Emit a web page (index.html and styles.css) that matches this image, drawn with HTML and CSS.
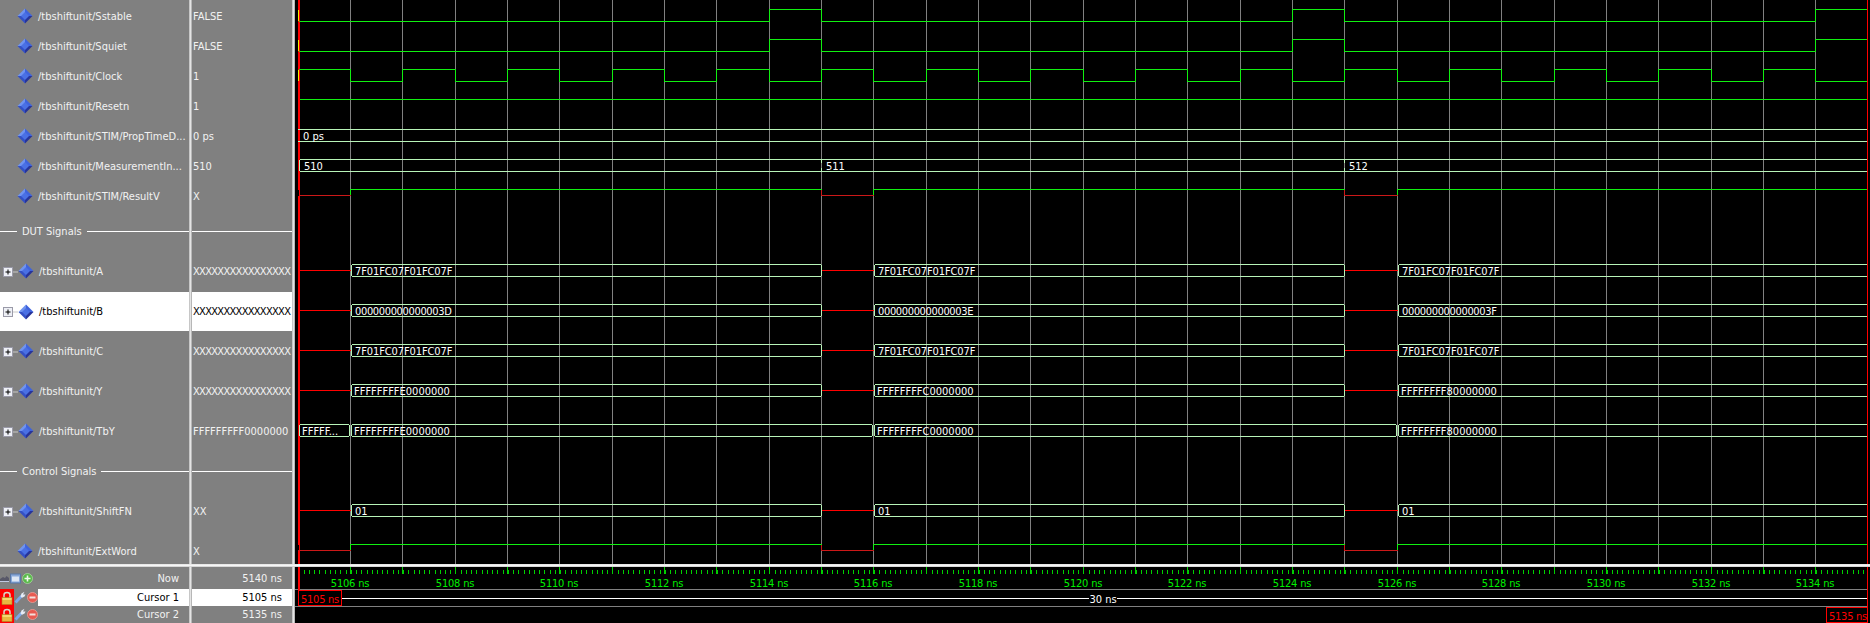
FILE: index.html
```html
<!DOCTYPE html>
<html lang="en">
<head>
<meta charset="utf-8">
<title>Wave</title>
<link rel="stylesheet" href="styles.css">
</head>
<body>
<svg class="defs" width="0" height="0" aria-hidden="true">
  <defs>
    <symbol id="dia" viewBox="0 0 16 16">
      <path d="M8 .5 .5 8 8 8Z" fill="#6f93f0"/>
      <path d="M8 .5 15.500 8 8 8Z" fill="#3f63dc"/>
      <path d="M.5 8 8 15.500 8 8Z" fill="#3450c4"/>
      <path d="M15.500 8 8 15.500 8 8Z" fill="#27349a"/>
      <path d="M8 4 12 8 8 12 4 8Z" fill="#4a70e4"/>
    </symbol>
    <symbol id="box" viewBox="0 0 15 10">
      <rect x=".5" y=".5" width="9" height="9" fill="#eef0f6" stroke="#9a9aa8"/>
      <path d="M2.500 5H7.500M5 2.500V7.500" stroke="#000" fill="none"/>
      <path d="M10 5H15" stroke="#c8c8c8" fill="none"/>
    </symbol>
    <symbol id="lock" viewBox="0 0 12 14">
      <path d="M3 7V4C3 .8 9 .8 9 4V7" fill="none" stroke="#d8d8c8" stroke-width="1.500"/>
      <rect x="1" y="6.500" width="10" height="7" fill="#e8b840" stroke="#b08820" stroke-width=".6"/>
      <rect x="1.500" y="7" width="9" height="2" fill="#f6d870"/>
    </symbol>
    <symbol id="wrench" viewBox="0 0 12 13">
      <path d="M1.500 11.500 7.500 5" stroke="#7fa8e8" stroke-width="2.800" fill="none"/>
      <path d="M6.500 5.500 7.500 2.500 10.500 .8 9 3.500 11.500 3.500 10.500 5.500 8 6.800Z" fill="#e6ecf6"/>
    </symbol>
    <symbol id="minus" viewBox="0 0 11 11">
      <circle cx="5.500" cy="5.500" r="5" fill="#e85a50" stroke="#f0a098" stroke-width=".8"/>
      <rect x="2.500" y="4.500" width="6" height="2" fill="#f4e0dc"/>
    </symbol>
    <symbol id="plus" viewBox="0 0 11 11">
      <circle cx="5.500" cy="5.500" r="5" fill="#58b848" stroke="#a8d8a0" stroke-width=".8"/>
      <path d="M2.500 5.500H8.500M5.500 2.500V8.500" stroke="#f0f8ec" stroke-width="1.600"/>
    </symbol>
    <symbol id="view" viewBox="0 0 11 10">
      <rect x=".5" y=".5" width="10" height="9" fill="#88a8d8" stroke="#5878a8"/>
      <rect x="2" y="3" width="7" height="5" fill="#dce6f4"/>
    </symbol>
    <symbol id="cam" viewBox="0 0 9 9">
      <path d="M0 7.500H9V4L6.500 2 5 4 3 3 0 5Z" fill="#585868"/>
      <path d="M0 7.500H9" stroke="#c0c8e0" fill="none"/>
    </symbol>
    <g id="bus">
      <path class="bus" d="M352.500 .5H820.500L821.500 1.500V11.500L820.500 12.500H352.500L351.500 11.500V1.500ZM875.500 .5H1343.500L1344.500 1.500V11.500L1343.500 12.500H875.500L874.500 11.500V1.500ZM1867 .5H1399.500L1398.500 1.500V11.500L1399.500 12.500H1867"/>
      <path class="x" d="M299 6.500H351M822 6.500H874M1345 6.500H1398"/>
    </g>
  </defs>
</svg>

<main class="app">
  <section class="top">
    <div class="col names">
      <div class="row"><svg class="dia"><use href="#dia"/></svg><span>/tbshiftunit/Sstable</span></div>
      <div class="row"><svg class="dia"><use href="#dia"/></svg><span>/tbshiftunit/Squiet</span></div>
      <div class="row"><svg class="dia"><use href="#dia"/></svg><span>/tbshiftunit/Clock</span></div>
      <div class="row"><svg class="dia"><use href="#dia"/></svg><span>/tbshiftunit/Resetn</span></div>
      <div class="row"><svg class="dia"><use href="#dia"/></svg><span>/tbshiftunit/STIM/PropTimeD...</span></div>
      <div class="row"><svg class="dia"><use href="#dia"/></svg><span>/tbshiftunit/MeasurementIn...</span></div>
      <div class="row"><svg class="dia"><use href="#dia"/></svg><span>/tbshiftunit/STIM/ResultV</span></div>
      <div class="row tall divider"><i class="stub"></i><span>DUT Signals</span><i class="rule"></i></div>
      <div class="row tall exp"><svg class="box"><use href="#box"/></svg><svg class="dia"><use href="#dia"/></svg><span>/tbshiftunit/A</span></div>
      <div class="row tall exp sel"><svg class="box"><use href="#box"/></svg><svg class="dia"><use href="#dia"/></svg><span>/tbshiftunit/B</span></div>
      <div class="row tall exp"><svg class="box"><use href="#box"/></svg><svg class="dia"><use href="#dia"/></svg><span>/tbshiftunit/C</span></div>
      <div class="row tall exp"><svg class="box"><use href="#box"/></svg><svg class="dia"><use href="#dia"/></svg><span>/tbshiftunit/Y</span></div>
      <div class="row tall exp"><svg class="box"><use href="#box"/></svg><svg class="dia"><use href="#dia"/></svg><span>/tbshiftunit/TbY</span></div>
      <div class="row tall divider"><i class="stub"></i><span>Control Signals</span><i class="rule"></i></div>
      <div class="row tall exp"><svg class="box"><use href="#box"/></svg><svg class="dia"><use href="#dia"/></svg><span>/tbshiftunit/ShiftFN</span></div>
      <div class="row tall"><svg class="dia"><use href="#dia"/></svg><span>/tbshiftunit/ExtWord</span></div>
    </div>
    <div class="vsep"></div>
    <div class="col vals">
      <div class="row">FALSE</div>
      <div class="row">FALSE</div>
      <div class="row">1</div>
      <div class="row">1</div>
      <div class="row">0 ps</div>
      <div class="row">510</div>
      <div class="row">X</div>
      <div class="row tall divider"><i class="rule"></i></div>
      <div class="row tall xs">XXXXXXXXXXXXXXXX</div>
      <div class="row tall sel xs">XXXXXXXXXXXXXXXX</div>
      <div class="row tall xs">XXXXXXXXXXXXXXXX</div>
      <div class="row tall xs">XXXXXXXXXXXXXXXX</div>
      <div class="row tall">FFFFFFFFF0000000</div>
      <div class="row tall divider"><i class="rule"></i></div>
      <div class="row tall">XX</div>
      <div class="row tall">X</div>
    </div>
    <div class="vsep"></div>
    <svg class="wave" viewBox="295 0 1575 564" width="1575" height="564">
      <path class="grid" d="M350.500 0V564M402.500 0V564M455.500 0V564M507.500 0V564M559.500 0V564M612.500 0V564M664.500 0V564M716.500 0V564M769.500 0V564M821.500 0V564M873.500 0V564M926.500 0V564M978.500 0V564M1030.500 0V564M1083.500 0V564M1135.500 0V564M1187.500 0V564M1240.500 0V564M1292.500 0V564M1344.500 0V564M1397.500 0V564M1449.500 0V564M1501.500 0V564M1554.500 0V564M1606.500 0V564M1658.500 0V564M1711.500 0V564M1763.500 0V564M1815.500 0V564"/>
      <rect class="cur" x="298" y="0" width="2" height="564"/>
      <path class="sig" d="M298.500 21.500H769.500V9.500H821.500V21.500H1292.500V9.500H1344.500V21.500H1815.500V9.500H1867"/>
      <path class="sig" d="M298.500 51.500H769.500V39.500H821.500V51.500H1292.500V39.500H1344.500V51.500H1815.500V39.500H1867"/>
      <path class="sig" d="M298.500 69.500H350.500V81.500H402.500V69.500H455.500V81.500H507.500V69.500H559.500V81.500H612.500V69.500H664.500V81.500H716.500V69.500H769.500V81.500H821.500V69.500H873.500V81.500H926.500V69.500H978.500V81.500H1030.500V69.500H1083.500V81.500H1135.500V69.500H1187.500V81.500H1240.500V69.500H1292.500V81.500H1344.500V69.500H1397.500V81.500H1449.500V69.500H1501.500V81.500H1554.500V69.500H1606.500V81.500H1658.500V69.500H1711.500V81.500H1763.500V69.500H1815.500V81.500H1867"/>
      <path class="yel" d="M298.500 10V21M298.500 40V51M298.500 70V81"/>
      <path class="sig" d="M300 99.500H1867"/>
      <path class="bus" d="M298 129.500H1867M298 141.500H1867"/>
      <text class="bt" x="303" y="140">0 ps</text>
      <path class="bus" d="M1867 159.500H300.500L299.500 160.500V170.500L300.500 171.500H1867M821.500 160V163M821.500 168V171M1344.500 160V163M1344.500 168V171"/>
      <text class="bt" x="304" y="170">510</text>
      <text class="bt" x="826" y="170">511</text>
      <text class="bt" x="1349" y="170">512</text>

      <path class="x1" d="M298 195.500H350.500M821.500 189.500V195.500H873.500M1344.500 189.500V195.500H1397.500"/>
      <path class="sig" d="M350.500 195V189.500H821.500M873.500 195V189.500H1344.500M1397.500 195V189.500H1867"/>
      <path class="notch" d="M298.500 190V196M298.500 545V551"/>

      <use href="#bus" x="0" y="264"/>
      <text class="bt s" x="355" y="275">7F01FC07F01FC07F</text>
      <text class="bt s" x="878" y="275">7F01FC07F01FC07F</text>
      <text class="bt s" x="1402" y="275">7F01FC07F01FC07F</text>

      <use href="#bus" x="0" y="304"/>
      <text class="bt z" x="355" y="315">000000000000003D</text>
      <text class="bt z" x="878" y="315">000000000000003E</text>
      <text class="bt z" x="1402" y="315">000000000000003F</text>

      <use href="#bus" x="0" y="344"/>
      <text class="bt s" x="355" y="355">7F01FC07F01FC07F</text>
      <text class="bt s" x="878" y="355">7F01FC07F01FC07F</text>
      <text class="bt s" x="1402" y="355">7F01FC07F01FC07F</text>

      <use href="#bus" x="0" y="384"/>
      <text class="bt" x="354" y="395">FFFFFFFFE0000000</text>
      <text class="bt" x="877" y="395">FFFFFFFFC0000000</text>
      <text class="bt" x="1401" y="395">FFFFFFFF80000000</text>

      <path class="bus" d="M300.500 424.500H348.500L349.500 425.500V435.500L348.500 436.500H300.500L299.500 435.500V425.500ZM352.500 424.500H871.500L872.500 425.500V435.500L871.500 436.500H352.500L351.500 435.500V425.500ZM875.500 424.500H1395.500L1396.500 425.500V435.500L1395.500 436.500H875.500L874.500 435.500V425.500ZM1867 424.500H1399.500L1398.500 425.500V435.500L1399.500 436.500H1867"/>
      <text class="bt" x="302" y="435">FFFFF...</text>
      <text class="bt" x="354" y="435">FFFFFFFFE0000000</text>
      <text class="bt" x="877" y="435">FFFFFFFFC0000000</text>
      <text class="bt" x="1401" y="435">FFFFFFFF80000000</text>

      <use href="#bus" x="0" y="504"/>
      <text class="bt" x="355" y="515">01</text>
      <text class="bt" x="878" y="515">01</text>
      <text class="bt" x="1402" y="515">01</text>

      <path class="x1" d="M298 550.500H350.500M821.500 544.500V550.500H873.500M1344.500 544.500V550.500H1397.500"/>
      <path class="sig" d="M350.500 550V544.500H821.500M873.500 550V544.500H1344.500M1397.500 550V544.500H1867"/>

      <path class="cur2" d="M1867.500 0V564"/>
    </svg>
  </section>

  <div class="hsep"></div>

  <section class="bottom">
    <div class="col names">
      <div class="brow now">
        <div class="tools"><svg class="ic first"><use href="#cam"/></svg><svg class="ic"><use href="#view"/></svg><svg class="ic"><use href="#plus"/></svg></div>
        <span class="blabel">Now</span>
      </div>
      <div class="brow curs">
        <div class="tools"><span class="lockbg"><svg class="lk"><use href="#lock"/></svg></span><svg class="wr"><use href="#wrench"/></svg><svg class="ic"><use href="#minus"/></svg></div>
        <span class="blabel sel">Cursor 1</span>
      </div>
      <div class="brow curs">
        <div class="tools"><span class="lockbg"><svg class="lk"><use href="#lock"/></svg></span><svg class="wr"><use href="#wrench"/></svg><svg class="ic"><use href="#minus"/></svg></div>
        <span class="blabel">Cursor 2</span>
      </div>
    </div>
    <div class="vsep"></div>
    <div class="col vals">
      <div class="brow now tval">5140 ns</div>
      <div class="brow curs tval sel">5105 ns</div>
      <div class="brow curs tval">5135 ns</div>
    </div>
    <div class="vsep"></div>
    <svg class="wave" viewBox="295 567 1575 56" width="1575" height="56">
      <path class="tick" d="M298.500 572H1867"/>
      <path class="major" d="M350.500 567V574M402.500 567V574M455.500 567V574M507.500 567V574M559.500 567V574M612.500 567V574M664.500 567V574M716.500 567V574M769.500 567V574M821.500 567V574M873.500 567V574M926.500 567V574M978.500 567V574M1030.500 567V574M1083.500 567V574M1135.500 567V574M1187.500 567V574M1240.500 567V574M1292.500 567V574M1344.500 567V574M1397.500 567V574M1449.500 567V574M1501.500 567V574M1554.500 567V574M1606.500 567V574M1658.500 567V574M1711.500 567V574M1763.500 567V574M1815.500 567V574"/>
      <g class="lab">
        <text x="350" y="587">5106 ns</text><text x="455" y="587">5108 ns</text><text x="559" y="587">5110 ns</text>
        <text x="664" y="587">5112 ns</text><text x="769" y="587">5114 ns</text><text x="873" y="587">5116 ns</text>
        <text x="978" y="587">5118 ns</text><text x="1083" y="587">5120 ns</text><text x="1187" y="587">5122 ns</text>
        <text x="1292" y="587">5124 ns</text><text x="1397" y="587">5126 ns</text><text x="1501" y="587">5128 ns</text>
        <text x="1606" y="587">5130 ns</text><text x="1711" y="587">5132 ns</text><text x="1815" y="587">5134 ns</text>
      </g>
      <path class="grid" d="M295 589.500H1867M295 606.500H1867"/>
      <path class="wline" d="M342 598.500H1089M1117 598.500H1867"/>
      <text class="bt mid" x="1103" y="603">30 ns</text>
      <rect class="cur" x="298" y="567" width="2" height="23"/>
      <rect class="cbox" x="298.500" y="590.500" width="43" height="15"/>
      <text class="ct" x="301" y="603">5105 ns</text>
      <path class="cur2" d="M1867.500 567V607"/>
      <rect class="cbox" x="1826.500" y="607.500" width="41" height="15"/>
      <text class="ct" x="1829" y="620">5135 ns</text>
    </svg>
  </section>
</main>
</body>
</html>
```
FILE: styles.css
```css
html, body { margin: 0; padding: 0; background: #000; }
body { width: 1870px; height: 623px; overflow: hidden; font-family: "DejaVu Sans Condensed", "DejaVu Sans", sans-serif; font-size: 11px; color: #f2f2f2; }
.defs { position: absolute; }
.app { display: flex; flex-direction: column; height: 623px; }
.top { display: flex; height: 564px; overflow: hidden; }
.bottom { display: flex; height: 56px; }
.hsep { height: 3px; background: linear-gradient(#d8d8d8, #fff 40%, #c8c8c8); }
.col { background: #808080; flex: none; }
.names { width: 189px; }
.vals { width: 100px; overflow: hidden; }
.top .col { padding-top: 1px; box-sizing: border-box; }
.vsep { width: 3px; flex: none; background: linear-gradient(90deg, #b8b8b8, #e4e4e4 50%, #a0a0a0); }
.wave { display: block; flex: none; background: #000; }

.row { display: flex; align-items: center; height: 30px; white-space: nowrap; box-sizing: border-box; }
.tall { height: 40px; }
.names .row { padding-left: 17px; }
.names .exp { padding-left: 3px; }
.vals .row { padding-left: 1px; }
.xs { letter-spacing: -.7px; }
.dia { width: 16px; height: 16px; flex: none; margin-right: 5px; }
.box { width: 15px; height: 10px; flex: none; margin-top: 1px; }
.sel { background: #fff; color: #000; border-top: 1px solid #808080; }
.names .divider { padding-left: 0; }
.stub { width: 17px; flex: none; height: 1px; background: #fff; }
.rule { flex: 1; height: 1px; background: #fff; }
.divider span { padding: 0 5px; }
.vals .divider { padding-left: 0; }

.brow { display: flex; align-items: center; box-sizing: border-box; }
.now { height: 22px; }
.curs { height: 17px; }
.tools { width: 38px; flex: none; display: flex; align-items: center; height: 100%; }
.ic { width: 11px; height: 11px; flex: none; margin-left: 1px; }
.first { width: 9px; margin-left: 0; }
.wr { width: 12px; height: 13px; flex: none; }
.lk { width: 12px; height: 14px; flex: none; }
.lockbg { width: 14px; height: 17px; background: #f00; display: flex; align-items: center; justify-content: center; flex: none; }
.blabel { flex: 1; height: 100%; display: flex; align-items: center; justify-content: flex-end; padding-right: 10px; }
.blabel.sel { border-top: 0; }
.tval { justify-content: flex-end; padding-right: 10px; }
.tval.sel { border-top: 0; }

.grid { stroke: #808080; stroke-width: 1; fill: none; shape-rendering: crispEdges; }
.sig { stroke: #10f010; fill: none; stroke-width: 1; shape-rendering: crispEdges; }
.bus { stroke: #b8f4b8; fill: none; stroke-width: 1; shape-rendering: crispEdges; }
.x { stroke: #ff0000; fill: none; stroke-width: 1; shape-rendering: crispEdges; }
.x1 { stroke: #cc1818; fill: none; stroke-width: 1; shape-rendering: crispEdges; }
.yel { stroke: #f0f000; fill: none; shape-rendering: crispEdges; }
.notch { stroke: #000; fill: none; shape-rendering: crispEdges; }
.cur { fill: #f00; shape-rendering: crispEdges; }
.cur2 { stroke: #f00; fill: none; shape-rendering: crispEdges; }
.bt { fill: #fff; font-size: 11px; }
.s { letter-spacing: -.1px; }
.z { letter-spacing: -.35px; }
.mid { text-anchor: middle; }
.tick { stroke: #00d000; stroke-width: 4; stroke-dasharray: 1 4.233; fill: none; shape-rendering: crispEdges; }
.major { stroke: #00d000; fill: none; shape-rendering: crispEdges; }
.lab text { fill: #00f000; text-anchor: middle; font-size: 11px; letter-spacing: -.2px; }
.wline { stroke: #fff; fill: none; shape-rendering: crispEdges; }
.cbox { fill: #000; stroke: #f00; shape-rendering: crispEdges; }
.ct { fill: #f00; font-size: 11px; letter-spacing: -.25px; }
```
